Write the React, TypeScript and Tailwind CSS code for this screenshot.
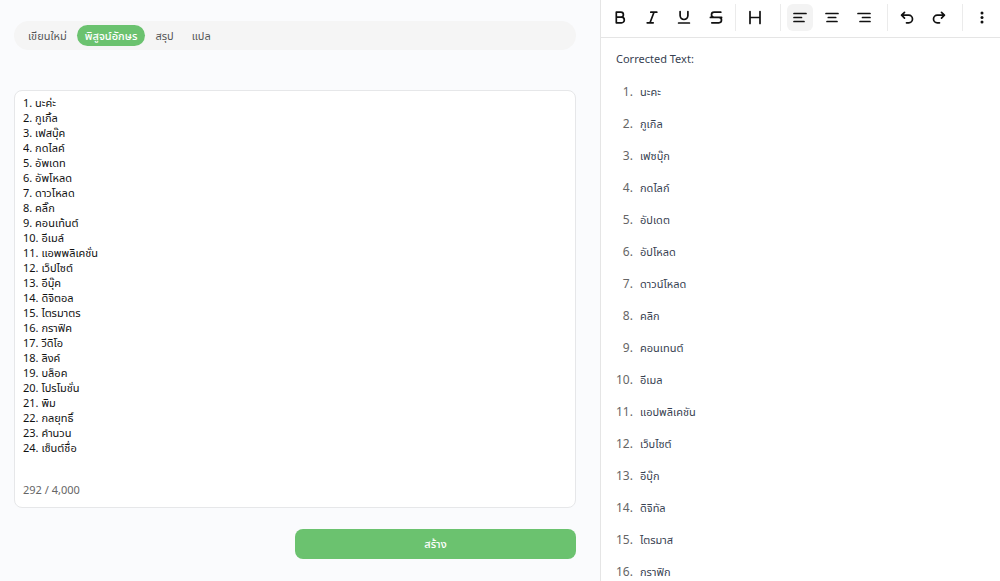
import React, { useState } from "react";

const tabs = [
  { id: "rewrite", text: "เขียนใหม่" },
  { id: "proofread", text: "พิสูจน์อักษร" },
  { id: "summary", text: "สรุป" },
  { id: "translate", text: "แปล" },
];

const words = [
  "นะค่ะ",
  "กูเกิ้ล",
  "เฟสบุ๊ค",
  "กดไลค์",
  "อัพเดท",
  "อัพโหลด",
  "ดาวโหลด",
  "คลิ๊ก",
  "คอนเท้นต์",
  "อีเมล์",
  "แอพพลิเคชั่น",
  "เว็ปไซต์",
  "อีบุ๊ค",
  "ดิจิตอล",
  "ไตรมาตร",
  "กราฟิค",
  "วีดิโอ",
  "ลิงค์",
  "บล็อค",
  "โปรโมชั่น",
  "พิม",
  "กลยุทธิ์",
  "คำนวน",
  "เซ็นต์ชื่อ",
];

const corrected = [
  "นะคะ",
  "กูเกิล",
  "เฟซบุ๊ก",
  "กดไลก์",
  "อัปเดต",
  "อัปโหลด",
  "ดาวน์โหลด",
  "คลิก",
  "คอนเทนต์",
  "อีเมล",
  "แอปพลิเคชัน",
  "เว็บไซต์",
  "อีบุ๊ก",
  "ดิจิทัล",
  "ไตรมาส",
  "กราฟิก",
];

// toolbar icons, all on a 20x20 grid
const toolGroups = [
  {
    className: "",
    tools: [
      { name: "Bold", d: "M6.3 4.2v10.6h5.2a2.8 2.8 0 0 0 0-5.6H6.3M6.3 4.2h4.6a2.5 2.5 0 0 1 0 5" },
      { name: "Italic", d: "M8.8 4.2h6M5.2 14.8h6M12 4.2L8 14.800" },
      { name: "Underline", d: "M6.1 3.5v4.100a3.900 3.900 0 0 0 7.800 0V3.500M4.600 15h10.800" },
      {
        name: "Strikethrough",
        d: "M14.8 4.2H8.1a2.6 2.6 0 0 0 0 5.2M4.4 9.4h11.2M12.800 9.400a2.700 2.700 0 0 1 0 5.400H5.800",
      },
    ],
  },
  {
    className: "pr-1.5",
    tools: [{ name: "Heading", d: "M5 3.5v12M15 3.5v12M5 9.500h10" }],
  },
  {
    className: "pr-1",
    tools: [
      { name: "Align left", d: "M4 5.500h12M4 9.500h7.500M4 13.500h10" },
      { name: "Align center", d: "M4 5.500h12M6.300 9.500h7.400M5 13.500h10" },
      { name: "Align right", d: "M4 5.500h12M8.500 9.500H16M6 13.500h10" },
    ],
  },
  {
    className: "pr-1",
    tools: [
      { name: "Undo", d: "M7.500 4.300L4.600 7.200l2.900 2.900M4.600 7.200h7.100a3.800 3.800 0 0 1 0 7.600H9.500" },
      { name: "Redo", d: "M12.500 4.300l2.900 2.900-2.900 2.900M15.400 7.200H8.300a3.800 3.800 0 0 0 0 7.600h2.200" },
    ],
  },
];

function Toolbar() {
  const [align, setAlign] = useState("Align left");

  return (
    <div className="flex items-center gap-1.5 border-b border-[#e5e5e5] px-1.5 pt-1 pb-1.5">
      {toolGroups.map((group, index) => (
        <React.Fragment key={index}>
          <div className={`flex gap-1.5 ${group.className}`}>
            {group.tools.map((tool) => (
              <button
                key={tool.name}
                type="button"
                aria-label={tool.name}
                onClick={() => tool.name.startsWith("Align") && setAlign(tool.name)}
                className={`flex h-[27px] w-[26px] items-center justify-center rounded-md ${
                  align === tool.name ? "bg-[#f3f3f3]" : ""
                }`}
              >
                <svg
                  viewBox="0 0 20 20"
                  className="h-5 w-5"
                  fill="none"
                  stroke="#111"
                  strokeWidth="1.7"
                  strokeLinecap="round"
                  strokeLinejoin="round"
                >
                  <path d={tool.d} />
                </svg>
              </button>
            ))}
          </div>
          <div className="h-[27px] w-px bg-[#ebebeb]" />
        </React.Fragment>
      ))}
      <button
        type="button"
        aria-label="More"
        className="flex h-[27px] w-[26px] items-center justify-center rounded-md"
      >
        <svg viewBox="0 0 20 20" className="h-5 w-5" fill="#111">
          <circle cx="11" cy="5" r="1.5" />
          <circle cx="11" cy="9.5" r="1.5" />
          <circle cx="11" cy="14" r="1.5" />
        </svg>
      </button>
    </div>
  );
}

function App() {
  const [active, setActive] = useState("proofread");
  const [value, setValue] = useState(
    words.map((word, index) => `${index + 1}. ${word}`).join("\n")
  );

  return (
    <div className="flex h-screen overflow-hidden bg-[#fafbfd] font-['Noto_Sans','Noto_Sans_Thai',sans-serif] text-[11px]">
      {/* input side */}
      <div className="flex w-3/5 flex-col pt-[21px] pr-6 pb-[22px] pl-3.5">
        <nav className="flex gap-0.5 rounded-full bg-[#f5f5f5] px-1.5 py-1">
          {tabs.map((tab) => (
            <button
              key={tab.id}
              type="button"
              onClick={() => setActive(tab.id)}
              className={`h-[21px] rounded-full px-2 leading-5 ${
                active === tab.id
                  ? "bg-[#6bc26f] font-medium text-white"
                  : "text-[#555]"
              }`}
            >
              {tab.text}
            </button>
          ))}
        </nav>

        <div className="mt-10 flex flex-1 flex-col rounded-lg border border-[#e6e7e9] bg-white px-2 pt-1 pb-2">
          <textarea
            aria-label="ข้อความ"
            spellCheck={false}
            value={value}
            onChange={(e) => setValue(e.target.value)}
            className="w-full flex-1 resize-none overflow-hidden leading-[15px] text-[#111] outline-none"
          />
          <p className="leading-[18px] text-[#666]">292 / 4,000</p>
        </div>

        <button
          type="button"
          className="mt-[21px] h-[30px] w-1/2 self-end rounded-lg bg-[#6bc26f] font-medium text-white"
        >
          สร้าง
        </button>
      </div>

      {/* result side */}
      <div className="flex w-2/5 flex-col border-l border-[#e5e5e5] bg-white">
        <Toolbar />
        <div className="overflow-hidden px-[15px] pt-[11px] text-[#374151]">
          <p className="leading-5">Corrected Text:</p>
          <ol className="mt-[7px] list-decimal pl-5">
            {corrected.map((word, index) => (
              <li key={index} className="pl-1 leading-8 marker:text-xs marker:text-[#666]">
                {word}
              </li>
            ))}
          </ol>
        </div>
      </div>
    </div>
  );
}

export default App;
